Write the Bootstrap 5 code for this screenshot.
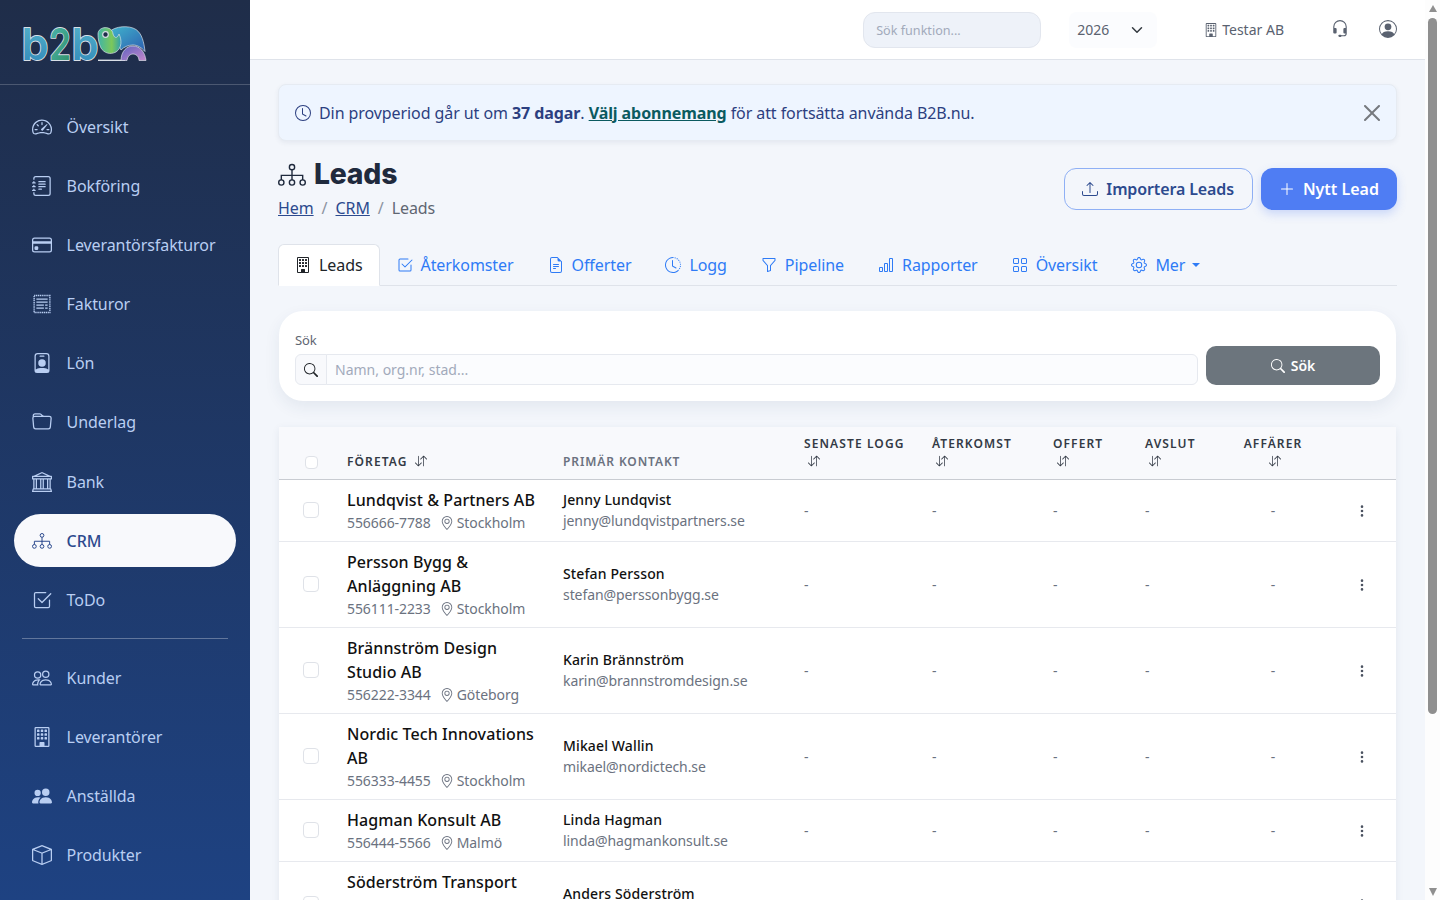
<!doctype html>
<html lang="sv">
<head>
<meta charset="utf-8">
<title>Leads</title>
<link href="https://cdn.jsdelivr.net/npm/bootstrap@5.3.0/dist/css/bootstrap.min.css" rel="stylesheet">
<style>
:root{--navy:#2c4a8e;}
html{scrollbar-width:none;}
html::-webkit-scrollbar{display:none;}
html,body{min-height:100%;}
body{font-family:"Noto Sans",sans-serif;background:#f3f6fb;color:#212529;font-size:16px;letter-spacing:-.005em;}
.ic{width:1em;height:1em;fill:currentColor;flex:none;display:inline-block;}
.side-wrap{width:250px;flex:none;height:100vh;position:sticky;top:0;overflow:hidden;background:linear-gradient(180deg,#1f2d49 0%,#1e4282 100%);}
.side-head{height:85px;border-bottom:1px solid rgba(255,255,255,.2);padding:25px 0 0 21px;}
.side-nav{padding:15.25px 14px 0;gap:6px;}
.side-link{display:flex;align-items:center;height:53.125px;padding:0 18px;border-radius:27px;color:#b9cef2;font-size:16px;text-decoration:none;}
.side-link:hover{color:#d6e2f8;}
.side-link .ic{font-size:20px;margin-right:14.6px;}
.side-link.on{background:#f8f9fc;color:#2c4a8e;font-weight:500;}
.side-rule{margin:6px 8px;border-top:1px solid rgba(255,255,255,.3);opacity:1;}
.scroll-rail{width:15px;flex:none;height:100vh;position:sticky;top:0;background:#fdfdfd;display:flex;flex-direction:column;align-items:center;padding:5px 0 4px;}
.rail-up{width:0;height:0;border-left:4.5px solid transparent;border-right:4.5px solid transparent;border-bottom:7px solid #8f8f8f;}
.rail-thumb{width:9px;height:696px;background:#8f8f8f;border-radius:5px;margin-top:6px;}
.rail-down{width:0;height:0;border-left:4.5px solid transparent;border-right:4.5px solid transparent;border-top:8px solid #8f8f8f;margin-top:auto;}
.top-bar{height:60px;background:#fff;border-bottom:1px solid #dfe3ea;padding:0 28px 0 0;}
.find-box{width:178px;height:36px;background:#eef2f9;border:1px solid #e2e6ee;border-radius:12px;font-size:12.6px;padding:1px 12px 0;}
.find-box::placeholder{color:#a2aabb;}
.year-box{width:88px;height:36px;background-color:#fbfcfe;border:0;border-radius:8px;font-size:14px;color:#5a6270;padding:0 8px;margin-left:28px;}
.co-name{font-size:14px;color:#5a6270;margin:0 47px 0 47px;letter-spacing:0;}
.co-name .ic{font-size:14px;margin-right:4px;vertical-align:-2px;}
.top-ic{color:#5a6270;margin-top:-2px;}
.top-ic.headset{font-size:18px;}
.top-ic.person{font-size:18px;margin-left:30px;}
.page-body{padding:24px 28px 19px 28px;}
.trial-box{height:57px;background:#eef5ff;border:1px solid #e6ebf2;border-radius:8px;box-shadow:0 2px 5px rgba(40,60,100,.07);color:#2c3f80;padding:0 12px 0 16px;margin:0 0 19px;}
.trial-box .ic{margin-right:8px;}
.trial-box b{font-weight:700;}
.trial-box a{color:#0b5a60;font-weight:700;}
.head-row{margin-bottom:26px;}
.page-title{font-family:Inter,sans-serif;font-weight:800;font-size:28.3px;line-height:29px;color:#1f2a3d;margin:0 0 9px;display:flex;align-items:center;letter-spacing:-.2px;}
.page-title svg{width:28px;height:28px;margin-right:8px;}
.crumbs{margin:0;font-size:16px;line-height:20px;--bs-breadcrumb-divider-color:#8c93a0;}
.crumbs a{color:var(--navy);}
.crumbs .active{color:#5f6672;}
.act-btns{gap:8px;margin-top:8px;}
.btn-ghost,.btn-main{height:42px;border-radius:12px;font-weight:600;font-size:16px;display:flex;align-items:center;gap:8px;}
.btn-ghost{color:var(--navy);border:1px solid #8fb0f5;background:transparent;padding:0 18px 0 17px;letter-spacing:-.008em;}
.btn-main{color:#fff;background:#4f7df3;border:0;padding:0 18px;box-shadow:0 4px 10px rgba(79,125,243,.25);}
.tab-strip{--bs-nav-tabs-border-color:#dfe3ea;margin-bottom:25px;}
.tab-strip .nav-link{color:#2e7bf6;height:42px;display:flex;align-items:center;gap:8px;padding:0 16px;}
.tab-strip .nav-link.active{color:#212529;background:#fff;border-color:#dfe3ea #dfe3ea #fff;}
.tab-strip .dropdown-toggle::after{margin-left:-1px;}
.search-card{margin:0 1px 26px;background:#fff;border-radius:24px;box-shadow:0 6px 16px rgba(40,60,100,.08);padding:20px 16px 16px;height:90px;}
.search-lab{font-size:13px;color:#5f6672;line-height:18px;margin-bottom:5px;}
.search-grp .input-group-text{background:#f8f9fc;border-color:#e6e9ef;padding:0 8px;font-size:14px;color:#212529;}
.search-grp .form-control{background:#fbfcfe;border-color:#e6e9ef;height:31px;font-size:14px;padding:0 8px;}
.search-grp .form-control::placeholder{color:#a2aabb;}
.search-go{width:174px;height:39px;background:#6c757d;border:0;border-radius:10px;color:#fff;font-weight:600;font-size:14px;gap:6px;margin-left:8px;}
.search-go:hover{background:#6c757d;color:#fff;}
.lead-wrap{margin:0 1px;background:#fff;box-shadow:0 2px 8px rgba(40,60,100,.08);}
.lead-tbl{table-layout:fixed;margin:0;--bs-table-bg:transparent;}
.lead-tbl th{background:#f8f9fc;font-size:12px;line-height:18px;font-weight:600;letter-spacing:1.1px;text-transform:uppercase;color:#333a45;padding:8px 0 8px 16px;vertical-align:bottom;border-bottom:1px solid #c9ccd2;white-space:nowrap;}
.lead-tbl th.quiet{color:#6b7280;letter-spacing:.9px;}
.lead-tbl th .ic{font-size:12px;vertical-align:-1px;}
.sort-line{display:block;padding-left:4px;}
.sort-inline{margin-left:3px;}
.lead-tbl td{padding:8px 16px;vertical-align:middle;border-bottom:1px solid #e7e9ee;color:#6b7280;font-size:14px;}
.c-check{width:52px;padding-left:24px!important;padding-right:0!important;}
.c-co{width:216px;}.c-ct{width:241px;}.c-lg{width:128px;}.c-at{width:121px;}.c-of{width:92px;}.c-av{width:99px;}.c-af{width:90px;padding-left:0!important;}
.lead-tbl td.co-cell{padding-right:8px;}
.lead-tbl .form-check-input{margin:0 0 2px;display:block;width:16px;height:16px;border-color:#dfe2e8;border-radius:4px;}
.lead-tbl th .form-check-input{width:13px;height:13px;margin:0 0 2px 2px;}
.co-title{font-size:16px;line-height:24px;font-weight:500;color:#111;letter-spacing:.09px;}
.co-sub{line-height:21px;font-size:14px;color:#6b7280;white-space:nowrap;}
.co-sub .ic{font-size:14px;margin:0 3px 0 9px;vertical-align:-2px;}
.ct-name{font-size:14px;line-height:21px;font-weight:500;color:#111;letter-spacing:.13px;}
.ct-mail{font-size:14px;line-height:21px;color:#6b7280;margin-bottom:2px;}
.more-cell{text-align:right;padding-right:27px!important;color:#4b5260!important;}
.more-cell .ic{font-size:14px;display:inline-block;vertical-align:-2px;}
.main-col{min-width:0;}
</style>
</head>
<body class="d-flex">
<svg width="0" height="0" class="d-none">
<defs>
<symbol id="i-speed" viewBox="0 0 16 16"><path d="M8 4a.5.5 0 0 1 .5.5V6a.5.5 0 0 1-1 0V4.5A.5.5 0 0 1 8 4M3.732 5.732a.5.5 0 0 1 .707 0l.915.914a.5.5 0 1 1-.708.708l-.914-.915a.5.5 0 0 1 0-.707M2 10a.5.5 0 0 1 .5-.5h1.586a.5.5 0 0 1 0 1H2.5A.5.5 0 0 1 2 10m9.5 0a.5.5 0 0 1 .5-.5h1.5a.5.5 0 0 1 0 1H12a.5.5 0 0 1-.5-.5m.754-4.246a.39.39 0 0 0-.527-.02L7.547 9.31a.91.91 0 1 0 1.302 1.258l3.434-4.297a.39.39 0 0 0-.029-.518z"/><path fill-rule="evenodd" d="M0 10a8 8 0 1 1 15.547 2.661c-.442 1.253-1.845 1.602-2.932 1.25C11.309 13.488 9.475 13 8 13c-1.474 0-3.31.488-4.615.911-1.087.352-2.49.003-2.932-1.25A8 8 0 0 1 0 10m8-7a7 7 0 0 0-6.603 9.329c.203.575.923.876 1.68.63C4.397 12.533 6.358 12 8 12s3.604.532 4.923.96c.757.245 1.477-.056 1.68-.631A7 7 0 0 0 8 3"/></symbol>
<symbol id="i-journal" viewBox="0 0 16 16"><path d="M5 10.5a.5.5 0 0 1 .5-.5h2a.5.5 0 0 1 0 1h-2a.5.5 0 0 1-.5-.5m0-2a.5.5 0 0 1 .5-.5h5a.5.5 0 0 1 0 1h-5a.5.5 0 0 1-.5-.5m0-2a.5.5 0 0 1 .5-.5h5a.5.5 0 0 1 0 1h-5a.5.5 0 0 1-.5-.5m0-2a.5.5 0 0 1 .5-.5h5a.5.5 0 0 1 0 1h-5a.5.5 0 0 1-.5-.5"/><path d="M3 0h10a2 2 0 0 1 2 2v12a2 2 0 0 1-2 2H3a2 2 0 0 1-2-2v-1h1v1a1 1 0 0 0 1 1h10a1 1 0 0 0 1-1V2a1 1 0 0 0-1-1H3a1 1 0 0 0-1 1v1H1V2a2 2 0 0 1 2-2"/><path d="M1 5v-.5a.5.5 0 0 1 1 0V5h.5a.5.5 0 0 1 0 1h-2a.5.5 0 0 1 0-1zm0 3v-.5a.5.5 0 0 1 1 0V8h.5a.5.5 0 0 1 0 1h-2a.5.5 0 0 1 0-1zm0 3v-.5a.5.5 0 0 1 1 0v.5h.5a.5.5 0 0 1 0 1h-2a.5.5 0 0 1 0-1z"/></symbol>
<symbol id="i-card" viewBox="0 0 16 16"><path d="M0 4a2 2 0 0 1 2-2h12a2 2 0 0 1 2 2v8a2 2 0 0 1-2 2H2a2 2 0 0 1-2-2zm2-1a1 1 0 0 0-1 1v1h14V4a1 1 0 0 0-1-1zm13 4H1v5a1 1 0 0 0 1 1h12a1 1 0 0 0 1-1z"/><path d="M2 10a1 1 0 0 1 1-1h1a1 1 0 0 1 1 1v1a1 1 0 0 1-1 1H3a1 1 0 0 1-1-1z"/></symbol>
<symbol id="i-invoice" viewBox="0 0 16 16"><rect x="1.7" y="1.2" width="12.6" height="13.6" fill="none" stroke="currentColor" stroke-width="1.1" stroke-dasharray="1 .5"/><path d="M3.500 3.500h9v1.100h-9zm0 2.400h9v1.100h-9zm0 2.400h6v1.100h-6zm7 0h2v1.100h-2zm-7 2.400h6v1.100h-6zm7 0h2v1.100h-2z"/></symbol>
<symbol id="i-badge" viewBox="0 0 16 16"><path d="M6.5 2a.5.5 0 0 0 0 1h3a.5.5 0 0 0 0-1zM11 8a3 3 0 1 1-6 0 3 3 0 0 1 6 0"/><path d="M4.5 0A2.5 2.5 0 0 0 2 2.5V14a2 2 0 0 0 2 2h8a2 2 0 0 0 2-2V2.5A2.5 2.5 0 0 0 11.5 0zM3 2.5A1.5 1.5 0 0 1 4.5 1h7A1.5 1.5 0 0 1 13 2.5v10.795a4.2 4.2 0 0 0-.776-.492C11.392 12.387 10.063 12 8 12s-3.392.387-4.224.803a4.2 4.2 0 0 0-.776.492z"/></symbol>
<symbol id="i-folder" viewBox="0 0 16 16"><path d="M.54 3.87.5 3a2 2 0 0 1 2-2h3.672a2 2 0 0 1 1.414.586l.828.828A2 2 0 0 0 9.828 3h3.982a2 2 0 0 1 1.992 2.181l-.637 7A2 2 0 0 1 13.174 14H2.826a2 2 0 0 1-1.991-1.819l-.637-7a2 2 0 0 1 .342-1.31zM2.19 4a1 1 0 0 0-.996 1.09l.637 7a1 1 0 0 0 .995.91h10.348a1 1 0 0 0 .995-.91l.637-7A1 1 0 0 0 13.81 4zm4.69-1.707A1 1 0 0 0 6.172 2H2.5a1 1 0 0 0-1 .981l.006.139q.323-.119.684-.12h5.396z"/></symbol>
<symbol id="i-bank" viewBox="0 0 16 16"><path d="m8 0 6.61 3h.89a.5.5 0 0 1 .5.5v2a.5.5 0 0 1-.5.5H15v7a.5.5 0 0 1 .485.38l.5 2a.498.498 0 0 1-.485.62H.5a.498.498 0 0 1-.485-.62l.5-2A.5.5 0 0 1 1 13V6H.5a.5.5 0 0 1-.5-.5v-2A.5.5 0 0 1 .5 3h.89zM3.777 3h8.447L8 1zM2 6v7h1V6zm2 0v7h2.5V6zm3.5 0v7h1V6zm2 0v7H12V6zM13 6v7h1V6zm2-1V4H1v1zm-.39 9H1.39l-.25 1h13.72z"/></symbol>
<symbol id="i-tree" viewBox="0 0 16 16"><g fill="none" stroke="currentColor" stroke-width=".8"><circle cx="8" cy="3.5" r="1.5"/><circle cx="1.9" cy="12.300" r="1.5"/><circle cx="8" cy="12.300" r="1.5"/><circle cx="14.100" cy="12.300" r="1.5"/><path d="M8 5v3.800M1.900 10.800V8.200h12.200v2.600M8 8.200v2.600"/></g></symbol>
<symbol id="i-check" viewBox="0 0 16 16"><path d="M3 14.5A1.5 1.5 0 0 1 1.5 13V3A1.5 1.5 0 0 1 3 1.5h8a.5.5 0 0 1 0 1H3a.5.5 0 0 0-.5.5v10a.5.5 0 0 0 .5.5h10a.5.5 0 0 0 .5-.5V8a.5.5 0 0 1 1 0v5a1.5 1.5 0 0 1-1.5 1.5z"/><path d="m8.354 10.354 7-7a.5.5 0 0 0-.708-.708L8 9.293 5.354 6.646a.5.5 0 1 0-.708.708l3 3a.5.5 0 0 0 .708 0"/></symbol>
<symbol id="i-people" viewBox="0 0 16 16"><path d="M15 14s1 0 1-1-1-4-5-4-5 3-5 4 1 1 1 1zm-7.978-1L7 12.996c.001-.264.167-1.03.76-1.72C8.312 10.629 9.282 10 11 10c1.717 0 2.687.63 3.24 1.276.593.69.758 1.457.76 1.72l-.008.002-.014.002zM11 7a2 2 0 1 0 0-4 2 2 0 0 0 0 4m3-2a3 3 0 1 1-6 0 3 3 0 0 1 6 0M6.936 9.28a6 6 0 0 0-1.23-.247A7 7 0 0 0 5 9c-4 0-5 3-5 4q0 1 1 1h4.216A2.24 2.24 0 0 1 5 13c0-1.01.377-2.042 1.09-2.904.243-.294.526-.569.846-.816M4.92 10A5.5 5.5 0 0 0 4 13H1c0-.26.164-1.03.76-1.724.545-.636 1.492-1.256 3.16-1.275ZM1.5 5.5a3 3 0 1 1 6 0 3 3 0 0 1-6 0m3-2a2 2 0 1 0 0 4 2 2 0 0 0 0-4"/></symbol>
<symbol id="i-building" viewBox="0 0 16 16"><path d="M4 2.5a.5.5 0 0 1 .5-.5h1a.5.5 0 0 1 .5.5v1a.5.5 0 0 1-.5.5h-1a.5.5 0 0 1-.5-.5zm3 0a.5.5 0 0 1 .5-.5h1a.5.5 0 0 1 .5.5v1a.5.5 0 0 1-.5.5h-1a.5.5 0 0 1-.5-.5zm3.500-.5a.5.5 0 0 0-.5.5v1a.5.5 0 0 0 .5.5h1a.5.5 0 0 0 .5-.5v-1a.5.5 0 0 0-.5-.5zM4 5.500a.5.5 0 0 1 .5-.5h1a.5.5 0 0 1 .5.5v1a.5.5 0 0 1-.5.5h-1a.5.5 0 0 1-.5-.5zM7.500 5a.5.5 0 0 0-.5.5v1a.5.5 0 0 0 .5.5h1a.5.5 0 0 0 .5-.5v-1a.5.5 0 0 0-.5-.5zm2.500.5a.5.5 0 0 1 .5-.5h1a.5.5 0 0 1 .5.5v1a.5.5 0 0 1-.5.5h-1a.5.5 0 0 1-.5-.5zM4.500 8a.5.5 0 0 0-.5.5v1a.5.5 0 0 0 .5.5h1a.5.5 0 0 0 .5-.5v-1a.5.5 0 0 0-.5-.5zm2.500.5a.5.5 0 0 1 .5-.5h1a.5.5 0 0 1 .5.5v1a.5.5 0 0 1-.5.5h-1a.5.5 0 0 1-.5-.5zm3.500-.5a.5.5 0 0 0-.5.5v1a.5.5 0 0 0 .5.5h1a.5.5 0 0 0 .5-.5v-1a.5.5 0 0 0-.5-.5z"/><path d="M2 1a1 1 0 0 1 1-1h10a1 1 0 0 1 1 1v14a1 1 0 0 1-1 1H3a1 1 0 0 1-1-1zm11 0H3v14h3v-2.500a.5.5 0 0 1 .5-.5h3a.5.5 0 0 1 .5.5V15h3z"/></symbol>
<symbol id="i-peoplefill" viewBox="0 0 16 16"><path d="M7 14s-1 0-1-1 1-4 5-4 5 3 5 4-1 1-1 1zm4-6a3 3 0 1 0 0-6 3 3 0 0 0 0 6m-5.784 6A2.24 2.24 0 0 1 5 13c0-1.355.68-2.75 1.936-3.72A6.3 6.3 0 0 0 5 9c-4 0-5 3-5 4s1 1 1 1zM4.500 8a2.500 2.500 0 1 0 0-5 2.500 2.500 0 0 0 0 5"/></symbol>
<symbol id="i-box" viewBox="0 0 16 16"><path d="M8.186 1.113a.5.5 0 0 0-.372 0L1.846 3.5 8 5.961 14.154 3.5zM15 4.239l-6.5 2.6v7.922l6.5-2.6V4.24zM7.5 14.762V6.838L1 4.239v7.925zM7.443.184a1.5 1.5 0 0 1 1.114 0l7.129 2.852A.5.5 0 0 1 16 3.5v8.662a1 1 0 0 1-.629.928l-7.185 2.874a.5.5 0 0 1-.372 0L.63 13.09a1 1 0 0 1-.63-.928V3.5a.5.5 0 0 1 .314-.464z"/></symbol>
<symbol id="i-clock" viewBox="0 0 16 16"><path d="M8 3.5a.5.5 0 0 0-1 0V9a.5.5 0 0 0 .252.434l3.5 2a.5.5 0 0 0 .496-.868L8 8.71z"/><path d="M8 16A8 8 0 1 0 8 0a8 8 0 0 0 0 16m7-8A7 7 0 1 1 1 8a7 7 0 0 1 14 0"/></symbol>
<symbol id="i-history" viewBox="0 0 16 16"><path d="M8.515 1.019A7 7 0 0 0 8 1V0a8 8 0 0 1 .589.022zm2.004.45a7 7 0 0 0-.985-.299l.219-.976q.576.129 1.126.342zm1.37.71a7 7 0 0 0-.439-.27l.493-.87a8 8 0 0 1 .979.654l-.615.789a7 7 0 0 0-.418-.302zm1.834 1.79a7 7 0 0 0-.653-.796l.724-.69q.406.429.747.91zm.744 1.352a7 7 0 0 0-.214-.468l.893-.45a8 8 0 0 1 .45 1.088l-.95.313a7 7 0 0 0-.179-.483m.53 2.507a7 7 0 0 0-.1-1.025l.985-.17q.1.58.116 1.17zm-.131 1.538q.05-.254.081-.51l.993.123a8 8 0 0 1-.23 1.155l-.964-.267q.069-.247.12-.501m-.952 2.379q.276-.436.486-.908l.914.405q-.24.54-.555 1.038zm-.964 1.205q.183-.183.35-.378l.758.653a8 8 0 0 1-.401.432z"/><path d="M8 1a7 7 0 1 0 4.95 11.95l.707.707A8.001 8.001 0 1 1 8 0z"/><path d="M7.5 3a.5.5 0 0 1 .5.5v5.21l3.248 1.856a.5.5 0 0 1-.496.868l-3.5-2A.5.5 0 0 1 7 9V3.5a.5.5 0 0 1 .5-.5"/></symbol>
<symbol id="i-file" viewBox="0 0 16 16"><path d="M5.5 7a.5.5 0 0 0 0 1h5a.5.5 0 0 0 0-1zM5 9.5a.5.5 0 0 1 .5-.5h5a.5.5 0 0 1 0 1h-5a.5.5 0 0 1-.5-.5m0 2a.5.5 0 0 1 .5-.5h2a.5.5 0 0 1 0 1h-2a.5.5 0 0 1-.5-.5"/><path d="M9.5 0H4a2 2 0 0 0-2 2v12a2 2 0 0 0 2 2h8a2 2 0 0 0 2-2V4.5zm0 1v2A1.5 1.5 0 0 0 11 4.5h2V14a1 1 0 0 1-1 1H4a1 1 0 0 1-1-1V2a1 1 0 0 1 1-1z"/></symbol>
<symbol id="i-funnel" viewBox="0 0 16 16"><path d="M1.5 1.5A.5.5 0 0 1 2 1h12a.5.5 0 0 1 .5.5v2a.5.5 0 0 1-.128.334L10 8.692V13.5a.5.5 0 0 1-.342.474l-3 1A.5.5 0 0 1 6 14.5V8.692L1.628 3.834A.5.5 0 0 1 1.5 3.5zm1 .5v1.308l4.372 4.858A.5.5 0 0 1 7 8.5v5.306l2-.666V8.5a.5.5 0 0 1 .128-.334L13.5 3.308V2z"/></symbol>
<symbol id="i-bars" viewBox="0 0 16 16"><path d="M4 11H2v3h2zm5-4H7v7h2zm5-5v12h-2V2zm-2-1a1 1 0 0 0-1 1v12a1 1 0 0 0 1 1h2a1 1 0 0 0 1-1V2a1 1 0 0 0-1-1zM6 7a1 1 0 0 1 1-1h2a1 1 0 0 1 1 1v7a1 1 0 0 1-1 1H7a1 1 0 0 1-1-1zm-5 4a1 1 0 0 1 1-1h2a1 1 0 0 1 1 1v3a1 1 0 0 1-1 1H2a1 1 0 0 1-1-1z"/></symbol>
<symbol id="i-grid" viewBox="0 0 16 16"><path d="M1 2.5A1.5 1.5 0 0 1 2.5 1h3A1.5 1.5 0 0 1 7 2.5v3A1.5 1.5 0 0 1 5.5 7h-3A1.5 1.5 0 0 1 1 5.5zM2.5 2a.5.5 0 0 0-.5.5v3a.5.5 0 0 0 .5.5h3a.5.5 0 0 0 .5-.5v-3a.5.5 0 0 0-.5-.5zm6.5.5A1.5 1.5 0 0 1 10.5 1h3A1.5 1.5 0 0 1 15 2.5v3A1.5 1.5 0 0 1 13.5 7h-3A1.5 1.5 0 0 1 9 5.5zm1.5-.5a.5.5 0 0 0-.5.5v3a.5.5 0 0 0 .5.5h3a.5.5 0 0 0 .5-.5v-3a.5.5 0 0 0-.5-.5zM1 10.5A1.5 1.5 0 0 1 2.5 9h3A1.5 1.5 0 0 1 7 10.5v3A1.5 1.5 0 0 1 5.5 15h-3A1.5 1.5 0 0 1 1 13.5zm1.5-.5a.5.5 0 0 0-.5.5v3a.5.5 0 0 0 .5.5h3a.5.5 0 0 0 .5-.5v-3a.5.5 0 0 0-.5-.5zm6.5.5A1.5 1.5 0 0 1 10.5 9h3a1.5 1.5 0 0 1 1.5 1.5v3a1.5 1.5 0 0 1-1.5 1.5h-3A1.5 1.5 0 0 1 9 13.5zm1.5-.5a.5.5 0 0 0-.5.5v3a.5.5 0 0 0 .5.5h3a.5.5 0 0 0 .5-.5v-3a.5.5 0 0 0-.5-.5z"/></symbol>
<symbol id="i-gear" viewBox="0 0 16 16"><path d="M8 4.754a3.246 3.246 0 1 0 0 6.492 3.246 3.246 0 0 0 0-6.492M5.754 8a2.246 2.246 0 1 1 4.492 0 2.246 2.246 0 0 1-4.492 0"/><path d="M9.796 1.343c-.527-1.79-3.065-1.79-3.592 0l-.094.319a.873.873 0 0 1-1.255.52l-.292-.16c-1.64-.892-3.433.902-2.54 2.541l.159.292a.873.873 0 0 1-.52 1.255l-.319.094c-1.79.527-1.79 3.065 0 3.592l.319.094a.873.873 0 0 1 .52 1.255l-.16.292c-.892 1.64.901 3.434 2.541 2.54l.292-.159a.873.873 0 0 1 1.255.52l.094.319c.527 1.79 3.065 1.79 3.592 0l.094-.319a.873.873 0 0 1 1.255-.52l.292.16c1.64.893 3.434-.902 2.54-2.541l-.159-.292a.873.873 0 0 1 .52-1.255l.319-.094c1.79-.527 1.79-3.065 0-3.592l-.319-.094a.873.873 0 0 1-.52-1.255l.16-.292c.893-1.64-.902-3.433-2.541-2.54l-.292.159a.873.873 0 0 1-1.255-.52zm-2.633.283c.246-.835 1.428-.835 1.674 0l.094.319a1.873 1.873 0 0 0 2.693 1.115l.291-.16c.764-.415 1.6.42 1.184 1.185l-.159.292a1.873 1.873 0 0 0 1.116 2.692l.318.094c.835.246.835 1.428 0 1.674l-.319.094a1.873 1.873 0 0 0-1.115 2.693l.16.291c.415.764-.42 1.6-1.185 1.184l-.291-.159a1.873 1.873 0 0 0-2.693 1.116l-.094.318c-.246.835-1.428.835-1.674 0l-.094-.319a1.873 1.873 0 0 0-2.692-1.115l-.292.16c-.764.415-1.6-.42-1.184-1.185l.159-.291A1.873 1.873 0 0 0 1.945 8.93l-.319-.094c-.835-.246-.835-1.428 0-1.674l.319-.094A1.873 1.873 0 0 0 3.06 4.377l-.16-.292c-.415-.764.42-1.6 1.185-1.184l.292.159a1.873 1.873 0 0 0 2.692-1.115z"/></symbol>
<symbol id="i-upload" viewBox="0 0 16 16"><path d="M.5 9.9a.5.5 0 0 1 .5.5v2.5a1 1 0 0 0 1 1h12a1 1 0 0 0 1-1v-2.500a.5.5 0 0 1 1 0v2.500a2 2 0 0 1-2 2H2a2 2 0 0 1-2-2v-2.500a.5.5 0 0 1 .5-.5"/><path d="M7.646 1.146a.5.5 0 0 1 .708 0l3 3a.5.5 0 0 1-.708.708L8.500 2.707V11.500a.5.5 0 0 1-1 0V2.707L5.354 4.854a.5.5 0 1 1-.708-.708z"/></symbol>
<symbol id="i-plus" viewBox="0 0 16 16"><path fill-rule="evenodd" d="M8 2a.5.5 0 0 1 .5.5v5h5a.5.5 0 0 1 0 1h-5v5a.5.5 0 0 1-1 0v-5h-5a.5.5 0 0 1 0-1h5v-5A.5.5 0 0 1 8 2"/></symbol>
<symbol id="i-search" viewBox="0 0 16 16"><path d="M11.742 10.344a6.5 6.5 0 1 0-1.397 1.398h-.001q.044.06.098.115l3.85 3.85a1 1 0 0 0 1.415-1.414l-3.85-3.85a1 1 0 0 0-.115-.1zM12 6.5a5.5 5.5 0 1 1-11 0 5.5 5.5 0 0 1 11 0"/></symbol>
<symbol id="i-pin" viewBox="0 0 16 16"><path d="M12.166 8.94c-.524 1.062-1.234 2.12-1.96 3.07A32 32 0 0 1 8 14.58a32 32 0 0 1-2.206-2.57c-.726-.95-1.436-2.008-1.96-3.07C3.304 7.867 3 6.862 3 6a5 5 0 0 1 10 0c0 .862-.305 1.867-.834 2.94M8 16s6-5.686 6-10A6 6 0 0 0 2 6c0 4.314 6 10 6 10"/><path d="M8 8a2 2 0 1 1 0-4 2 2 0 0 1 0 4m0 1a3 3 0 1 0 0-6 3 3 0 0 0 0 6"/></symbol>
<symbol id="i-dots" viewBox="0 0 16 16"><path d="M9.5 13a1.5 1.5 0 1 1-3 0 1.5 1.5 0 0 1 3 0m0-5a1.5 1.5 0 1 1-3 0 1.5 1.5 0 0 1 3 0m0-5a1.5 1.5 0 1 1-3 0 1.5 1.5 0 0 1 3 0"/></symbol>
<symbol id="i-sort" viewBox="0 0 16 16"><path fill-rule="evenodd" d="M11.5 15a.5.5 0 0 0 .5-.5V2.707l3.146 3.147a.5.5 0 0 0 .708-.708l-4-4a.5.5 0 0 0-.708 0l-4 4a.5.5 0 1 0 .708.708L11 2.707V14.5a.5.5 0 0 0 .5.5m-7-14a.5.5 0 0 1 .5.5v11.793l3.146-3.147a.5.5 0 0 1 .708.708l-4 4a.5.5 0 0 1-.708 0l-4-4a.5.5 0 0 1 .708-.708L4 13.293V1.5a.5.5 0 0 1 .5-.5"/></symbol>
<symbol id="i-headset" viewBox="0 0 16 16"><path d="M8 1a5 5 0 0 0-5 5v1h1a1 1 0 0 1 1 1v3a1 1 0 0 1-1 1H3a1 1 0 0 1-1-1V6a6 6 0 1 1 12 0v6a2.5 2.5 0 0 1-2.5 2.5H9.366a1 1 0 0 1-.866.5h-1a1 1 0 1 1 0-2h1a1 1 0 0 1 .866.5H11.5A1.5 1.5 0 0 0 13 12h-1a1 1 0 0 1-1-1V8a1 1 0 0 1 1-1h1V6a5 5 0 0 0-5-5"/></symbol>
<symbol id="i-person" viewBox="0 0 16 16"><path d="M11 6a3 3 0 1 1-6 0 3 3 0 0 1 6 0"/><path fill-rule="evenodd" d="M0 8a8 8 0 1 1 16 0A8 8 0 0 1 0 8m8-7a7 7 0 0 0-5.468 11.37C3.242 11.226 4.805 10 8 10s4.757 1.225 5.468 2.37A7 7 0 0 0 8 1"/></symbol>
</defs>
</svg>

<aside class="side-wrap">
  <div class="side-head">
    <svg width="130" height="42" viewBox="0 0 130 42" role="img" aria-label="b2b">
      <defs>
        <linearGradient id="lg-b" x1="0" y1="0" x2="0" y2="1"><stop offset="0" stop-color="#58b6cc"/><stop offset="1" stop-color="#2f86b8"/></linearGradient>
        <linearGradient id="lg-2" x1="0" y1="0" x2="1" y2="1"><stop offset="0" stop-color="#4fb7b8"/><stop offset="1" stop-color="#2f8f5f"/></linearGradient>
        <linearGradient id="lg-t" x1="0" y1="0" x2="1" y2="0"><stop offset="0" stop-color="#3fb4a8"/><stop offset=".6" stop-color="#7cc85a"/><stop offset="1" stop-color="#2f9fb0"/></linearGradient>
        <linearGradient id="lg-e" x1="0" y1="0" x2="1" y2="1"><stop offset="0" stop-color="#40b5cd"/><stop offset="1" stop-color="#2d5fb0"/></linearGradient>
        <linearGradient id="lg-l" x1="0" y1="0" x2="1" y2="1"><stop offset="0" stop-color="#5d62c0"/><stop offset="1" stop-color="#c788cc"/></linearGradient>
      </defs>
      <g font-family="Inter,sans-serif" font-weight="600" font-size="44" stroke="#d9dfe6" stroke-width="1.8" paint-order="stroke" stroke-linejoin="round">
        <text x="0.500" y="35" fill="url(#lg-b)" textLength="27" lengthAdjust="spacingAndGlyphs">b</text>
        <text x="28" y="35" fill="url(#lg-2)" textLength="22" lengthAdjust="spacingAndGlyphs">2</text>
        <text x="50.500" y="35" fill="url(#lg-b)" textLength="27" lengthAdjust="spacingAndGlyphs">b</text>
      </g>
      <path d="M77 35.300H104" stroke="#d9dfe6" stroke-width="1.400" fill="none"/>
      <path d="M100 35.500C100 26 106 21 112 21c7 0 12 6 13 14.500h-7c0-4-3-6.500-6-6.500s-5.500 2.500-6 6.500z" fill="url(#lg-l)" stroke="#d9dfe6" stroke-width=".7"/>
      <path d="M88 7C94 1 108 0 115 4.500c6 4 8 13 9 22-3.500-4-7.500-6.500-12-6.500-5 0-9 2-12 5-3-6-7-13-12-18z" fill="url(#lg-e)" stroke="#d9dfe6" stroke-width=".7"/>
      <path d="M77 9c0-8 14-9 15 0 2 6 5 3 6 0 3 6 3 14-3 18-6 3-12 1-15-4-2-4-3-9-3-14z" fill="url(#lg-t)" stroke="#d9dfe6" stroke-width=".7"/>
      <circle cx="84.500" cy="9.500" r="2.800" fill="#1f2d49" stroke="#d9dfe6" stroke-width="1.200"/>
    </svg>
  </div>
  <nav class="nav flex-column side-nav">
    <a class="side-link" href="#"><svg class="ic"><use href="#i-speed"/></svg>Översikt</a>
    <a class="side-link" href="#"><svg class="ic"><use href="#i-journal"/></svg>Bokföring</a>
    <a class="side-link" href="#"><svg class="ic"><use href="#i-card"/></svg>Leverantörsfakturor</a>
    <a class="side-link" href="#"><svg class="ic"><use href="#i-invoice"/></svg>Fakturor</a>
    <a class="side-link" href="#"><svg class="ic"><use href="#i-badge"/></svg>Lön</a>
    <a class="side-link" href="#"><svg class="ic"><use href="#i-folder"/></svg>Underlag</a>
    <a class="side-link" href="#"><svg class="ic"><use href="#i-bank"/></svg>Bank</a>
    <a class="side-link on" href="#"><svg class="ic"><use href="#i-tree"/></svg>CRM</a>
    <a class="side-link" href="#"><svg class="ic"><use href="#i-check"/></svg>ToDo</a>
    <hr class="side-rule">
    <a class="side-link" href="#"><svg class="ic"><use href="#i-people"/></svg>Kunder</a>
    <a class="side-link" href="#"><svg class="ic"><use href="#i-building"/></svg>Leverantörer</a>
    <a class="side-link" href="#"><svg class="ic"><use href="#i-peoplefill"/></svg>Anställda</a>
    <a class="side-link" href="#"><svg class="ic"><use href="#i-box"/></svg>Produkter</a>
  </nav>
</aside>

<div class="flex-grow-1 main-col">
  <header class="top-bar d-flex align-items-center justify-content-end">
    <input class="form-control find-box" type="text" placeholder="Sök funktion...">
    <select class="form-select year-box"><option>2026</option></select>
    <span class="co-name"><svg class="ic"><use href="#i-building"/></svg>Testar AB</span>
    <svg class="ic top-ic headset"><use href="#i-headset"/></svg>
    <svg class="ic top-ic person"><use href="#i-person"/></svg>
  </header>

  <main class="page-body">
    <div class="trial-box d-flex align-items-center">
      <svg class="ic"><use href="#i-clock"/></svg>
      <span>Din provperiod går ut om <b>37 dagar</b>. <a href="#">Välj abonnemang</a> för att fortsätta använda B2B.nu.</span>
      <button type="button" class="btn-close ms-auto" aria-label="Close"></button>
    </div>

    <div class="head-row d-flex justify-content-between align-items-start">
      <div>
        <h1 class="page-title"><svg class="ic"><use href="#i-tree"/></svg>Leads</h1>
        <ol class="breadcrumb crumbs">
          <li class="breadcrumb-item"><a href="#">Hem</a></li>
          <li class="breadcrumb-item"><a href="#">CRM</a></li>
          <li class="breadcrumb-item active">Leads</li>
        </ol>
      </div>
      <div class="d-flex act-btns">
        <button class="btn btn-ghost"><svg class="ic"><use href="#i-upload"/></svg>Importera Leads</button>
        <button class="btn btn-main"><svg class="ic"><use href="#i-plus"/></svg>Nytt Lead</button>
      </div>
    </div>

    <ul class="nav nav-tabs tab-strip">
      <li class="nav-item"><a class="nav-link active" href="#"><svg class="ic"><use href="#i-building"/></svg>Leads</a></li>
      <li class="nav-item"><a class="nav-link" href="#"><svg class="ic"><use href="#i-check"/></svg>Återkomster</a></li>
      <li class="nav-item"><a class="nav-link" href="#"><svg class="ic"><use href="#i-file"/></svg>Offerter</a></li>
      <li class="nav-item"><a class="nav-link" href="#"><svg class="ic"><use href="#i-history"/></svg>Logg</a></li>
      <li class="nav-item"><a class="nav-link" href="#"><svg class="ic"><use href="#i-funnel"/></svg>Pipeline</a></li>
      <li class="nav-item"><a class="nav-link" href="#"><svg class="ic"><use href="#i-bars"/></svg>Rapporter</a></li>
      <li class="nav-item"><a class="nav-link" href="#"><svg class="ic"><use href="#i-grid"/></svg>Översikt</a></li>
      <li class="nav-item dropdown"><a class="nav-link dropdown-toggle" href="#"><svg class="ic"><use href="#i-gear"/></svg>Mer</a></li>
    </ul>

    <section class="search-card">
      <div class="d-flex align-items-end">
        <div class="flex-grow-1">
          <div class="search-lab">Sök</div>
          <div class="input-group search-grp">
            <span class="input-group-text"><svg class="ic"><use href="#i-search"/></svg></span>
            <input class="form-control" type="text" placeholder="Namn, org.nr, stad...">
          </div>
        </div>
        <button class="btn search-go d-flex align-items-center justify-content-center"><svg class="ic"><use href="#i-search"/></svg>Sök</button>
      </div>
    </section>

    <section class="lead-wrap">
      <table class="table lead-tbl">
        <thead>
          <tr>
            <th class="c-check"><input class="form-check-input" type="checkbox" aria-label="Alla"></th>
            <th class="c-co">Företag <span class="sort-inline"><svg class="ic"><use href="#i-sort"/></svg></span></th>
            <th class="c-ct quiet">Primär kontakt</th>
            <th class="c-lg">Senaste logg<span class="sort-line"><svg class="ic"><use href="#i-sort"/></svg></span></th>
            <th class="c-at">Återkomst<span class="sort-line"><svg class="ic"><use href="#i-sort"/></svg></span></th>
            <th class="c-of">Offert<span class="sort-line"><svg class="ic"><use href="#i-sort"/></svg></span></th>
            <th class="c-av">Avslut<span class="sort-line"><svg class="ic"><use href="#i-sort"/></svg></span></th>
            <th class="c-af text-center">Affärer<span class="sort-line"><svg class="ic"><use href="#i-sort"/></svg></span></th>
            <th></th>
          </tr>
        </thead>
        <tbody>
          <tr>
            <td class="c-check"><input class="form-check-input" type="checkbox" aria-label="Välj"></td>
            <td class="co-cell"><div class="co-title">Lundqvist &amp; Partners AB</div><div class="co-sub">556666-7788<svg class="ic"><use href="#i-pin"/></svg>Stockholm</div></td>
            <td><div class="ct-name">Jenny Lundqvist</div><div class="ct-mail">jenny@lundqvistpartners.se</div></td>
            <td>-</td><td>-</td><td>-</td><td>-</td><td class="text-center">-</td>
            <td class="more-cell"><svg class="ic"><use href="#i-dots"/></svg></td>
          </tr>
          <tr>
            <td class="c-check"><input class="form-check-input" type="checkbox" aria-label="Välj"></td>
            <td class="co-cell"><div class="co-title">Persson Bygg &amp; Anläggning AB</div><div class="co-sub">556111-2233<svg class="ic"><use href="#i-pin"/></svg>Stockholm</div></td>
            <td><div class="ct-name">Stefan Persson</div><div class="ct-mail">stefan@perssonbygg.se</div></td>
            <td>-</td><td>-</td><td>-</td><td>-</td><td class="text-center">-</td>
            <td class="more-cell"><svg class="ic"><use href="#i-dots"/></svg></td>
          </tr>
          <tr>
            <td class="c-check"><input class="form-check-input" type="checkbox" aria-label="Välj"></td>
            <td class="co-cell"><div class="co-title">Brännström Design Studio AB</div><div class="co-sub">556222-3344<svg class="ic"><use href="#i-pin"/></svg>Göteborg</div></td>
            <td><div class="ct-name">Karin Brännström</div><div class="ct-mail">karin@brannstromdesign.se</div></td>
            <td>-</td><td>-</td><td>-</td><td>-</td><td class="text-center">-</td>
            <td class="more-cell"><svg class="ic"><use href="#i-dots"/></svg></td>
          </tr>
          <tr>
            <td class="c-check"><input class="form-check-input" type="checkbox" aria-label="Välj"></td>
            <td class="co-cell"><div class="co-title">Nordic Tech Innovations AB</div><div class="co-sub">556333-4455<svg class="ic"><use href="#i-pin"/></svg>Stockholm</div></td>
            <td><div class="ct-name">Mikael Wallin</div><div class="ct-mail">mikael@nordictech.se</div></td>
            <td>-</td><td>-</td><td>-</td><td>-</td><td class="text-center">-</td>
            <td class="more-cell"><svg class="ic"><use href="#i-dots"/></svg></td>
          </tr>
          <tr>
            <td class="c-check"><input class="form-check-input" type="checkbox" aria-label="Välj"></td>
            <td class="co-cell"><div class="co-title">Hagman Konsult AB</div><div class="co-sub">556444-5566<svg class="ic"><use href="#i-pin"/></svg>Malmö</div></td>
            <td><div class="ct-name">Linda Hagman</div><div class="ct-mail">linda@hagmankonsult.se</div></td>
            <td>-</td><td>-</td><td>-</td><td>-</td><td class="text-center">-</td>
            <td class="more-cell"><svg class="ic"><use href="#i-dots"/></svg></td>
          </tr>
          <tr>
            <td class="c-check"><input class="form-check-input" type="checkbox" aria-label="Välj"></td>
            <td class="co-cell"><div class="co-title">Söderström Transport<br>AB</div><div class="co-sub">556555-6677<svg class="ic"><use href="#i-pin"/></svg>Uppsala</div></td>
            <td><div class="ct-name">Anders Söderström</div><div class="ct-mail">anders@soderstromtransport.se</div></td>
            <td>-</td><td>-</td><td>-</td><td>-</td><td class="text-center">-</td>
            <td class="more-cell"><svg class="ic"><use href="#i-dots"/></svg></td>
          </tr>
          <tr>
            <td class="c-check"><input class="form-check-input" type="checkbox" aria-label="Välj"></td>
            <td class="co-cell"><div class="co-title">Ekman Redovisning AB</div><div class="co-sub">556777-8899<svg class="ic"><use href="#i-pin"/></svg>Lund</div></td>
            <td><div class="ct-name">Eva Ekman</div><div class="ct-mail">eva@ekmanredovisning.se</div></td>
            <td>-</td><td>-</td><td>-</td><td>-</td><td class="text-center">-</td>
            <td class="more-cell"><svg class="ic"><use href="#i-dots"/></svg></td>
          </tr>
        </tbody>
      </table>
    </section>
  </main>
</div>
<div class="scroll-rail"><span class="rail-up"></span><span class="rail-thumb"></span><span class="rail-down"></span></div>
<script src="https://cdn.jsdelivr.net/npm/bootstrap@5.3.0/dist/js/bootstrap.bundle.min.js"></script>
</body>
</html>
